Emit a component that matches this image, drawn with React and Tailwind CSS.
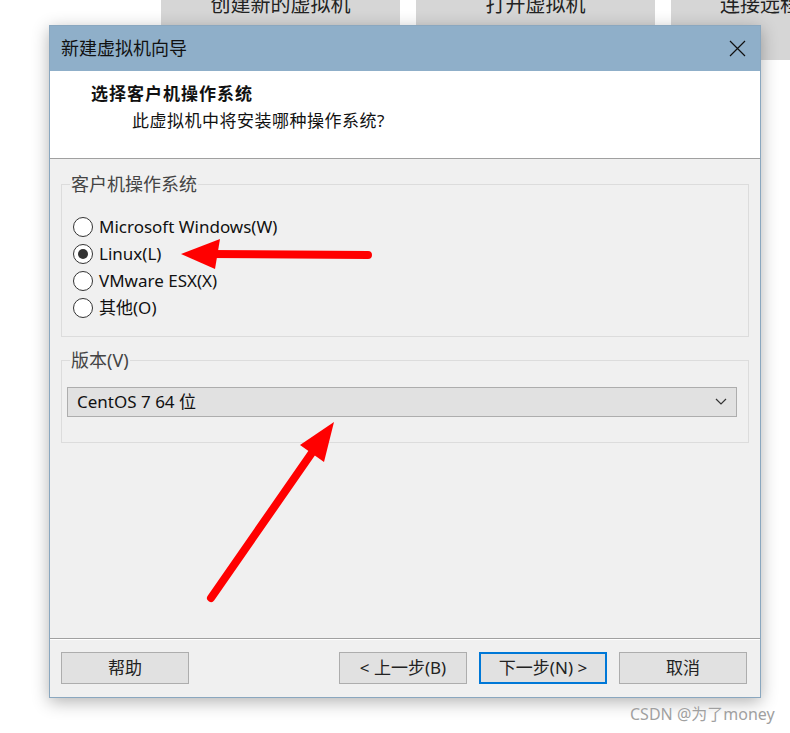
import React, { useState } from "react";

const font = { fontFamily: '"Noto Sans", "Noto Sans CJK SC", sans-serif' };

const osList = [
  { id: "win", label: "Microsoft Windows(W)" },
  { id: "linux", label: "Linux(L)" },
  { id: "esx", label: "VMware ESX(X)" },
  { id: "other", label: "其他(O)" }
];

const Radio = ({ checked, label, onClick }) => (
  <button onClick={onClick} className="flex items-center h-[27px] text-left">
    <span className="w-[20px] h-[20px] rounded-full border border-[#333] bg-white flex items-center justify-center">
      {checked && <span className="w-[10px] h-[10px] rounded-full bg-[#333]" />}
    </span>
    <span className="ml-[6px] text-[17px] text-[#111]">{label}</span>
  </button>
);

const WinButton = ({ children, primary }) => (
  <button
    className={`w-[128px] h-[32px] bg-[#e1e1e1] text-[17px] text-[#222] ${
      primary ? "border-2 border-[#0078d7]" : "border border-[#adadad]"
    }`}
  >
    {children}
  </button>
);

const App = () => {
  const [os, setOs] = useState("linux");

  return (
    <div className="relative w-[790px] h-[733px] bg-white overflow-hidden" style={font}>
      {/* desktop buttons behind the dialog */}
      <div className="flex gap-[16px] pl-[161px]">
        <div className="shrink-0 w-[239px] h-[60px] bg-[#d6d6d6] text-[20px] text-[#222] text-center leading-[10px]">创建新的虚拟机</div>
        <div className="shrink-0 w-[239px] h-[60px] bg-[#d6d6d6] text-[20px] text-[#222] text-center leading-[10px]">打开虚拟机</div>
        <div className="shrink-0 w-[239px] h-[60px] bg-[#d6d6d6] text-[20px] text-[#222] pl-[49px] leading-[10px] whitespace-nowrap">连接远程服务器</div>
      </div>

      {/* wizard window */}
      <div className="absolute left-[49px] top-[25px] w-[712px] h-[673px] flex flex-col bg-[#f0f0f0] border border-[#8aa7bf] shadow-[0_4px_16px_rgba(0,0,0,0.3)]">
        <div className="h-[45px] bg-[#8fafc9] flex items-center justify-between pl-[11px] pr-[14px]">
          <span className="text-[18px] text-[#111]">新建虚拟机向导</span>
          <svg width="17" height="17" viewBox="0 0 17 17">
            <path d="M1 1 L16 16 M16 1 L1 16" stroke="#111" strokeWidth="1.2" />
          </svg>
        </div>

        <div className="h-[88px] bg-white border-b border-[#a0a0a0] pt-[13px]">
          <div className="pl-[41px] text-[17px] leading-[20px] tracking-[1px] font-bold text-[#111]">选择客户机操作系统</div>
          <div className="pl-[82px] mt-[7px] text-[17px] leading-[20px] tracking-[0.5px] text-[#111]">此虚拟机中将安装哪种操作系统?</div>
        </div>

        <div className="flex-1 px-[11px] pt-[13px]">
          <fieldset className="border border-[#dcdcdc] px-[11px] pb-[15px] pt-[17px]">
            <legend className="text-[18px] leading-[24px] text-[#444] px-[1px] -ml-[3px]">客户机操作系统</legend>
            <div className="flex flex-col">
              {osList.map(o => (
                <Radio key={o.id} label={o.label} checked={os === o.id} onClick={() => setOs(o.id)} />
              ))}
            </div>
          </fieldset>

          <fieldset className="mt-[11px] border border-[#dcdcdc] px-[5px] pb-[25px] pt-[15px]">
            <legend className="text-[18px] leading-[24px] text-[#444] px-[1px] ml-[3px]">版本(V)</legend>
            <div className="w-[670px] h-[30px] bg-[#e1e1e1] border border-[#adadad] flex items-center justify-between pl-[9px] pr-[9px]">
              <span className="text-[17px] text-[#111]">CentOS 7 64 位</span>
              <svg width="12" height="8" viewBox="0 0 12 8">
                <path d="M1 1 L6 6 L11 1" fill="none" stroke="#333" strokeWidth="1.2" />
              </svg>
            </div>
          </fieldset>
        </div>

        <div className="border-t border-[#a0a0a0] shadow-[inset_0_1px_0_#ffffff] h-[59px] flex items-start pt-[13px] pl-[11px] pr-[13px]">
          <WinButton>帮助</WinButton>
          <div className="flex-1" />
          <div className="flex gap-[12px]">
            <WinButton>&lt; 上一步(B)</WinButton>
            <WinButton primary>下一步(N) &gt;</WinButton>
            <WinButton>取消</WinButton>
          </div>
        </div>
      </div>

      {/* annotation arrows */}
      <svg className="absolute left-0 top-0 pointer-events-none" width="790" height="733">
        <line x1="368" y1="255" x2="210" y2="254" stroke="#ff0000" strokeWidth="8" strokeLinecap="round" />
        <polygon points="181,254 220,239 215,269" fill="#ff0000" />
        <line x1="211" y1="598" x2="318" y2="444" stroke="#ff0000" strokeWidth="8" strokeLinecap="round" />
        <polygon points="334,422 300,445 324,462" fill="#ff0000" />
      </svg>

      <div className="absolute left-[630px] top-[704px] text-[16px] leading-[20px] text-[#a0a0a0] [text-shadow:0_0_1px_#ffffff]">CSDN @为了money</div>
    </div>
  );
};

export default App;
